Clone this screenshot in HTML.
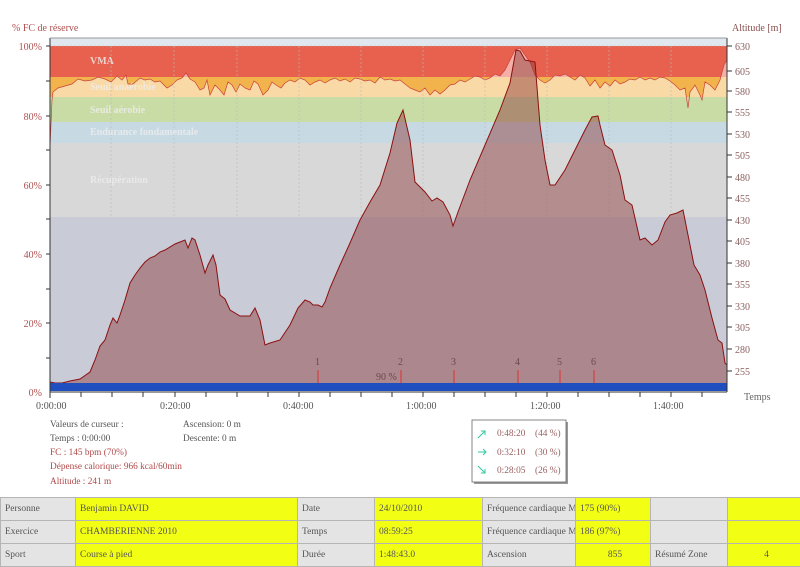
<!DOCTYPE html>
<html><head><meta charset="utf-8"><style>
body{margin:0;width:800px;height:562px;overflow:hidden;background:#fff;font-family:"Liberation Serif",serif;}
svg text{font-family:"Liberation Serif",serif;font-size:10px;}
svg text.s{font-size:9.3px;}
table{position:absolute;left:0;top:497px;border-collapse:collapse;font-size:9.5px;color:#555;table-layout:fixed;width:801px;}
td{border:1px solid #b5b5b5;height:23px;padding:0 0 0 4px;white-space:nowrap;overflow:hidden;box-sizing:border-box;}
td.g{background:#e4e4e4;}td.y{background:#f2ff14;}
</style></head><body>
<svg width="800" height="497" style="position:absolute;left:0;top:0">
<text x="12" y="31" fill="#b05050">% FC de réserve</text>
<text x="732" y="31" fill="#8a5050">Altitude  [m]</text>
<rect x="50" y="38" width="677" height="8" fill="#e1e7ef"/>
<rect x="50" y="46" width="677" height="31" fill="#e8604e"/>
<rect x="50" y="77" width="677" height="20" fill="#f2b24c"/>
<rect x="50" y="97" width="677" height="25" fill="#cadca6"/>
<rect x="50" y="122" width="677" height="21" fill="#c7d9e3"/>
<rect x="50" y="143" width="677" height="74" fill="#d8d8d8"/>
<rect x="50" y="217" width="677" height="167" fill="#c9cbd7"/>
<clipPath id="c"><rect x="50" y="46" width="677" height="51"/></clipPath>
<polygon clip-path="url(#c)" fill="#fff" fill-opacity="0.5" points="50,148 52,100 53,92 58,88 65,86 72,84 78,79 85,81 92,80 98,77 105,79 111,82 117,76 122,80 126,75 128,84 133,84 140,78 145,80 150,79 155,82 160,81 167,88 172,85 177,80 182,78 186,73 190,79 195,82 200,90 204,88 207,80 210,95 215,85 220,90 224,95 228,82 232,85 236,92 240,84 245,88 250,90 254,81 258,84 263,95 268,90 272,82 276,85 281,88 285,83 290,80 295,82 300,78 305,80 310,85 315,82 320,80 325,83 330,80 335,78 340,81 345,79 350,82 355,78 360,79 365,81 370,80 375,83 380,77 385,80 390,79 395,81 400,80 405,84 410,88 415,90 420,92 425,88 430,95 435,90 440,94 445,90 450,85 455,84 460,80 465,82 470,79 475,76 480,77 485,80 490,78 495,74 500,76 505,70 510,60 515,50 520,48 525,55 530,62 535,75 540,80 545,83 550,80 555,75 560,76 565,74 570,77 575,80 580,75 585,78 590,86 595,80 600,88 605,82 610,86 615,80 620,84 625,82 630,79 635,80 640,77 645,80 650,78 655,80 660,77 665,78 670,81 675,85 680,90 685,88 688,108 690,92 695,85 700,95 702,100 705,82 710,85 715,90 720,80 724,65 727,60 727,200 50,200"/>
<polyline fill="none" stroke="#c8403a" stroke-width="0.7" points="50,148 52,100 53,92 58,88 65,86 72,84 78,79 85,81 92,80 98,77 105,79 111,82 117,76 122,80 126,75 128,84 133,84 140,78 145,80 150,79 155,82 160,81 167,88 172,85 177,80 182,78 186,73 190,79 195,82 200,90 204,88 207,80 210,95 215,85 220,90 224,95 228,82 232,85 236,92 240,84 245,88 250,90 254,81 258,84 263,95 268,90 272,82 276,85 281,88 285,83 290,80 295,82 300,78 305,80 310,85 315,82 320,80 325,83 330,80 335,78 340,81 345,79 350,82 355,78 360,79 365,81 370,80 375,83 380,77 385,80 390,79 395,81 400,80 405,84 410,88 415,90 420,92 425,88 430,95 435,90 440,94 445,90 450,85 455,84 460,80 465,82 470,79 475,76 480,77 485,80 490,78 495,74 500,76 505,70 510,60 515,50 520,48 525,55 530,62 535,75 540,80 545,83 550,80 555,75 560,76 565,74 570,77 575,80 580,75 585,78 590,86 595,80 600,88 605,82 610,86 615,80 620,84 625,82 630,79 635,80 640,77 645,80 650,78 655,80 660,77 665,78 670,81 675,85 680,90 685,88 688,108 690,92 695,85 700,95 702,100 705,82 710,85 715,90 720,80 724,65 727,60"/>
<g stroke="#bbb" stroke-dasharray="2,2" stroke-width="0.6">
<line x1="111" y1="46" x2="111" y2="217"/><line x1="174" y1="46" x2="174" y2="217"/><line x1="237" y1="46" x2="237" y2="217"/><line x1="299" y1="46" x2="299" y2="217"/><line x1="361" y1="46" x2="361" y2="217"/><line x1="423" y1="46" x2="423" y2="217"/><line x1="485" y1="46" x2="485" y2="217"/><line x1="547" y1="46" x2="547" y2="217"/><line x1="609" y1="46" x2="609" y2="217"/><line x1="671" y1="46" x2="671" y2="217"/>
<line x1="50" y1="46" x2="727" y2="46"/>
</g>
<g fill="#eee" fill-opacity="0.8">
<text x="90" y="64" style="font-weight:bold">VMA</text>
<text x="90" y="90" style="font-weight:bold">Seuil anaérobie</text>
<text x="90" y="113" style="font-weight:bold">Seuil aérobie</text>
<text x="90" y="135" style="font-weight:bold">Endurance fondamentale</text>
<text x="90" y="183" style="font-weight:bold">Récupération</text>
</g>
<polygon fill="rgb(140,60,60)" fill-opacity="0.47" stroke="#8b1010" stroke-width="1" points="50,382 55,383 62,383 70,381 80,379 90,372 95,360 100,346 105,340 110,325 113,318 117,323 120,315 125,300 130,283 135,275 140,268 145,262 150,258 155,256 160,252 165,250 175,244 185,240 188,248 192,238 195,240 200,255 205,273 208,265 213,255 216,265 220,295 225,299 230,310 240,316 250,316 255,308 260,320 265,345 270,343 280,340 290,325 298,308 305,300 310,302 313,305 318,305 322,307 325,302 330,288 340,265 350,243 360,220 370,202 380,185 390,153 397,123 403,110 410,140 415,182 425,192 432,201 437,198 443,202 450,215 453,226 458,212 470,180 485,145 500,110 510,83 516,50 520,51 525,60 535,62 540,125 545,160 550,185 555,185 565,170 575,150 585,130 592,117 598,116 600,125 605,145 612,150 620,175 625,200 632,205 640,240 645,238 652,245 658,240 665,222 670,215 677,213 683,210 690,245 694,265 700,275 705,290 712,318 718,340 722,343 725,363 727,365 727,384 50,384"/>
<g stroke="#e03030" stroke-width="1"><line x1="318" y1="370" x2="318" y2="383"/><line x1="401" y1="370" x2="401" y2="383"/><line x1="454" y1="370" x2="454" y2="383"/><line x1="518" y1="370" x2="518" y2="383"/><line x1="560" y1="370" x2="560" y2="383"/><line x1="594" y1="370" x2="594" y2="383"/></g>
<g fill="#6a4a4a"><text x="315" y="365">1</text><text x="398" y="365">2</text><text x="451" y="365">3</text><text x="515" y="365">4</text><text x="557" y="365">5</text><text x="591" y="365">6</text><text x="376" y="380">90 %</text></g>
<rect x="50" y="383" width="677" height="8" fill="#1f4fbf"/>
<g stroke="#333" stroke-width="1">
<line x1="50" y1="38" x2="50" y2="398"/><line x1="50" y1="392" x2="727" y2="392"/><line x1="727" y1="38" x2="727" y2="392"/><line x1="50" y1="38" x2="727" y2="38" stroke="#999"/>
<line x1="46" y1="46" x2="50" y2="46"/><line x1="46" y1="81" x2="50" y2="81"/><line x1="46" y1="116" x2="50" y2="116"/><line x1="46" y1="150" x2="50" y2="150"/><line x1="46" y1="185" x2="50" y2="185"/><line x1="46" y1="219" x2="50" y2="219"/><line x1="46" y1="254" x2="50" y2="254"/><line x1="46" y1="289" x2="50" y2="289"/><line x1="46" y1="323" x2="50" y2="323"/><line x1="46" y1="358" x2="50" y2="358"/>
<line x1="81" y1="392" x2="81" y2="397"/><line x1="112" y1="392" x2="112" y2="397"/><line x1="143" y1="392" x2="143" y2="397"/><line x1="175" y1="392" x2="175" y2="397"/><line x1="206" y1="392" x2="206" y2="397"/><line x1="237" y1="392" x2="237" y2="397"/><line x1="268" y1="392" x2="268" y2="397"/><line x1="299" y1="392" x2="299" y2="397"/><line x1="330" y1="392" x2="330" y2="397"/><line x1="361" y1="392" x2="361" y2="397"/><line x1="392" y1="392" x2="392" y2="397"/><line x1="423" y1="392" x2="423" y2="397"/><line x1="454" y1="392" x2="454" y2="397"/><line x1="485" y1="392" x2="485" y2="397"/><line x1="516" y1="392" x2="516" y2="397"/><line x1="547" y1="392" x2="547" y2="397"/><line x1="578" y1="392" x2="578" y2="397"/><line x1="609" y1="392" x2="609" y2="397"/><line x1="640" y1="392" x2="640" y2="397"/><line x1="671" y1="392" x2="671" y2="397"/><line x1="702" y1="392" x2="702" y2="397"/>
<line x1="727" y1="46" x2="732" y2="46"/><line x1="727" y1="71" x2="732" y2="71"/><line x1="727" y1="91" x2="732" y2="91"/><line x1="727" y1="112" x2="732" y2="112"/><line x1="727" y1="134" x2="732" y2="134"/><line x1="727" y1="155" x2="732" y2="155"/><line x1="727" y1="177" x2="732" y2="177"/><line x1="727" y1="198" x2="732" y2="198"/><line x1="727" y1="220" x2="732" y2="220"/><line x1="727" y1="241" x2="732" y2="241"/><line x1="727" y1="263" x2="732" y2="263"/><line x1="727" y1="284" x2="732" y2="284"/><line x1="727" y1="306" x2="732" y2="306"/><line x1="727" y1="327" x2="732" y2="327"/><line x1="727" y1="349" x2="732" y2="349"/><line x1="727" y1="371" x2="732" y2="371"/>
</g>
<g fill="#b05050" text-anchor="end"><text x="42" y="50">100%</text><text x="42" y="120">80%</text><text x="42" y="189">60%</text><text x="42" y="258">40%</text><text x="42" y="327">20%</text><text x="42" y="396">0%</text></g>
<g fill="#8a6060"><text x="735" y="50">630</text><text x="735" y="75">605</text><text x="735" y="95">580</text><text x="735" y="116">555</text><text x="735" y="138">530</text><text x="735" y="159">505</text><text x="735" y="181">480</text><text x="735" y="202">455</text><text x="735" y="224">430</text><text x="735" y="245">405</text><text x="735" y="267">380</text><text x="735" y="288">355</text><text x="735" y="310">330</text><text x="735" y="331">305</text><text x="735" y="353">280</text><text x="735" y="375">255</text>
<text x="744" y="400" fill="#666">Temps</text></g>
<g fill="#555"><text x="36" y="409">0:00:00</text><text x="160" y="409">0:20:00</text><text x="283" y="409">0:40:00</text><text x="406" y="409">1:00:00</text><text x="530" y="409">1:20:00</text><text x="653" y="409">1:40:00</text>
<text class="s" x="50" y="427">Valeurs de curseur :</text><text class="s" x="50" y="441">Temps : 0:00:00</text>
<text class="s" x="183" y="427">Ascension: 0 m</text><text class="s" x="183" y="441">Descente: 0 m</text></g>
<g fill="#b04848"><text class="s" x="50" y="455">FC : 145 bpm (70%)</text><text class="s" x="50" y="469">Dépense calorique: 966 kcal/60min</text><text class="s" x="50" y="484">Altitude : 241 m</text></g>
<rect x="474" y="422" width="94" height="62" fill="#999"/>
<rect x="472" y="420" width="94" height="62" fill="#fff" stroke="#666" stroke-width="0.8"/>
<g fill="#9a6060"><text class="s" x="497" y="436">0:48:20</text><text class="s" x="535" y="436">(44 %)</text><text class="s" x="497" y="455">0:32:10</text><text class="s" x="535" y="455">(30 %)</text><text class="s" x="497" y="473">0:28:05</text><text class="s" x="535" y="473">(26 %)</text></g>
<g stroke="#2fc9a0" stroke-width="1" fill="none"><path d="M478,438 L485,431 M481,431 L485,431 L485,435"/><path d="M478,452 L486,452 M483,449 L486,452 L483,455"/><path d="M478,466 L485,473 M485,469 L485,473 L481,473"/></g>
</svg>
<table>
<colgroup><col style="width:75px"><col style="width:222px"><col style="width:77px"><col style="width:108px"><col style="width:93px"><col style="width:75px"><col style="width:77px"><col style="width:74px"></colgroup>
<tr><td class="g">Personne</td><td class="y">Benjamin DAVID</td><td class="g">Date</td><td class="y">24/10/2010</td><td class="g">Fréquence cardiaque M</td><td class="y">175 (90%)</td><td class="g"></td><td class="y"></td></tr>
<tr><td class="g">Exercice</td><td class="y">CHAMBERIENNE 2010</td><td class="g">Temps</td><td class="y">08:59:25</td><td class="g">Fréquence cardiaque M</td><td class="y">186 (97%)</td><td class="g"></td><td class="y"></td></tr>
<tr><td class="g">Sport</td><td class="y">Course à pied</td><td class="g">Durée</td><td class="y">1:48:43.0</td><td class="g">Ascension</td><td class="y" style="text-align:center">855</td><td class="g">Résumé Zone</td><td class="y" style="text-align:center">4</td></tr>
</table>
</body></html>
